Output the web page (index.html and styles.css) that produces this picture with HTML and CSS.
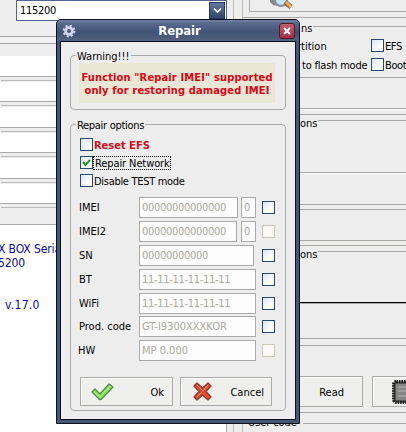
FILE: index.html
```html
<!DOCTYPE html>
<html lang="en">
<head>
<meta charset="utf-8">
<title>Repair</title>
<link rel="stylesheet" href="styles.css">
</head>
<body>
<div class="app">
  <div class="left">
    <div class="port"><div class="combo"><span class="t">115200</span><span class="drop"><svg width="9" height="7" viewBox="0 0 9 7"><path d="M1 1.500 4.500 5 8 1.500" fill="none" stroke="#fff" stroke-width="1.600"/></svg></span></div></div>
    <div class="sep"></div>
    <div class="rows"><i></i><i></i><i></i><i></i><i></i><i></i></div>
    <div class="log"><p>X BOX Serial</p><p>5200</p><p class="ver">v.17.0</p></div>
  </div>
  <div class="right">
    <div class="search"><svg width="24" height="11" viewBox="0 0 24 11"><path d="M0 0h11v5l-3 1-5-1-3-3z" fill="#888"/><circle cx="11" cy="0" r="6" fill="#bfe5f8" stroke="#8a9298" stroke-width="2"/><path d="m15 2 6 5" stroke="#8b6848" stroke-width="5"/><path d="m16 2 5 5" stroke="#f6a95a" stroke-width="3"/></svg></div>
    <div class="panel p1"><div class="legend"><span class="t">ns</span></div>
      <div class="opt o1"><span class="t">rtition</span><b class="cb"></b><span class="t">EFS</span></div>
      <div class="opt o2"><span class="t">to flash mode</span><b class="cb"></b><span class="t">Boot</span></div>
    </div>
    <div class="panel p2"></div>
    <div class="panel p3"><div class="legend"><span class="t">ons</span></div></div>
    <div class="panel p4"></div>
    <div class="panel p5"></div>
    <div class="panel p6"><div class="legend"><span class="t">ons</span></div></div>
    <div class="panel p7"></div>
    <div class="panel p8"><div class="btn read"><span class="t">Read</span></div><div class="btn chip"><svg width="22" height="24" viewBox="0 0 22 24"><rect x="1.500" y="1.500" width="24" height="21" rx="3" fill="#555" stroke="#111" stroke-width="3" stroke-dasharray="1.500 1"/><rect x="4" y="4" width="20" height="16" fill="#858585"/><path d="M6 7h16M6 11h16M6 16h16" stroke="#b5b5b5"/></svg></div></div>
    <div class="user"><span class="t">User code</span></div>
  </div>
</div>
<div class="dialog">
  <div class="title">
    <svg class="gear" width="14" height="14" viewBox="0 0 14 14"><circle cx="7" cy="7" r="3.400" fill="none" stroke="#d3d5f2" stroke-width="2.800"/><circle cx="7" cy="7" r="5.400" fill="none" stroke="#d3d5f2" stroke-width="2" stroke-dasharray="2.100 2.140"/></svg>
    <h1>Repair</h1>
    <span class="close"><svg width="8" height="8" viewBox="0 0 8 8"><path d="m1 1 6 6M7 1 1 7" stroke="#fff" stroke-width="1.800"/></svg></span>
  </div>
  <div class="body">
    <div class="group warning"><span class="cap t">Warning!!!</span>
      <div class="msg"><span>Function "Repair IMEI" supported</span><span>only for restoring damaged IMEI</span></div>
    </div>
    <div class="group options"><span class="cap t">Repair options</span>
      <label class="check red"><b class="cb"></b><span>Reset EFS</span></label>
      <label class="check"><b class="cb"><svg width="9" height="9" viewBox="0 0 9 9"><path d="m1 4 2.500 3L8 2" fill="none" stroke="#229222" stroke-width="2"/></svg></b><span class="focus">Repair Network</span></label>
      <label class="check"><b class="cb"></b><span class="t">Disable TEST mode</span></label>
      <div class="fields">
        <div class="row"><span class="name">IMEI</span><span class="in w98">00000000000000</span><span class="in one">0</span><b class="cb"></b></div>
        <div class="row"><span class="name">IMEI2</span><span class="in w97">00000000000000</span><span class="in one">0</span><b class="cb off"></b></div>
        <div class="row"><span class="name">SN</span><span class="in w115">00000000000</span><b class="cb"></b></div>
        <div class="row"><span class="name">BT</span><span class="in">11-11-11-11-11-11</span><b class="cb"></b></div>
        <div class="row"><span class="name">WiFi</span><span class="in">11-11-11-11-11-11</span><b class="cb"></b></div>
        <div class="row prod"><span class="name">Prod. code</span><span class="in model">GT-I9300XXXKOR</span><b class="cb"></b></div>
        <div class="row"><span class="name hw">HW</span><span class="in model">MP 0.000</span><b class="cb off"></b></div>
      </div>
      <div class="actions">
        <div class="btn ok"><svg width="23" height="18" viewBox="0 0 23 18"><path d="m1 9 3-3 5 5L18 1l4 3L10 16.500H8.500z" fill="#8ee05e" stroke="#4f8f45" stroke-linejoin="round" stroke-width="1.300"/><path d="m3 9 6 5L19 3" fill="none" stroke="#b9f090"/></svg><span>Ok</span></div>
        <div class="btn cancel"><svg width="19" height="19" viewBox="0 0 19 19"><path d="m4 1 5.500 5L15 1l3 3-5 5.500 5 5.500-3 3-5.500-5L4 18l-3-3 5-5.500L1 4z" fill="#ec4b28" stroke="#8d3b32" stroke-linejoin="round" stroke-width="1.300"/><path d="m4 3 6 6 5-6M4 15l5-5" fill="none" stroke="#ff987a"/></svg><span>Cancel</span></div>
      </div>
    </div>
  </div>
</div>
</body>
</html>
```
FILE: styles.css
```css
* { box-sizing: border-box; }
body { margin: 0; width: 406px; height: 432px; overflow: hidden; position: relative; background: #ededed; color: #000; font: 11px/14px "DejaVu Sans Condensed", "DejaVu Sans", sans-serif; white-space: nowrap; }
.t { letter-spacing: -0.3px; }
.app { display: flex; height: 432px; }
.left { flex: none; width: 242px; display: flex; flex-direction: column; background: linear-gradient(#bbb, #bbb) 233px 0 / 1px 100% no-repeat; }
.port { height: 36px; padding-left: 16px; }
.combo { width: 211px; height: 21px; border: 1px solid #53668f; background: #fff; display: flex; justify-content: space-between; padding: 3px 1px 1px 3px; }
.drop { width: 16px; height: 17px; margin-top: -2px; background: linear-gradient(#63779e, #334669); border: 1px solid #263a60; display: grid; place-items: center; }
.sep { height: 8px; width: 226px; border-top: 1px solid #a4a4a0; border-bottom: 1px solid #a4a4a0; background: #f2f2f2; }
.rows { padding-top: 12px; width: 227px; height: 180px; display: flex; flex-direction: column; gap: 5px; }
.rows i { height: 20.500px; flex: none; background: #fff; border-bottom: 1px solid #aaa; box-shadow: 0 4px 0 -1px #ededed, 0 5px 0 -1px #bbb; }
.log { width: 227px; flex: 1; background: #fff; border: solid #aaa; border-width: 1px 1px 0 0; color: #0b0ba0; padding-top: 17px; font-size: 12px; letter-spacing: -0.1px; }
.log p { margin: 0 0 0 -2px; line-height: 14px; }
.log p:first-child { margin-left: -2px; }
.log .ver { margin: 28px 0 0 5px; letter-spacing: 0.3px; }
.right { flex: 1; min-width: 0; border-left: 1px solid #bbb; display: flex; flex-direction: column; }
.search { height: 14px; margin-left: 6px; padding-left: 20px; border: solid #aaa; border-width: 0 0 1px 1px; }
.search svg { display: block; }
.panel { border: solid #a6a6a2; border-width: 1px 0; flex: none; }
.legend { display: flex; align-items: center; gap: 1px; padding-left: 58px; height: 14px; }
.legend .t { margin-top: 4px; letter-spacing: 0; }
.legend::after { content: ""; flex: 1; height: 1px; background: #a9a9a5; margin-top: -2px; }
.p1 { height: 61px; margin-top: 5px; padding-top: 2px; }
.opt { display: flex; align-items: center; height: 19px; }
.opt .cb { margin-left: auto; }
.opt .t { letter-spacing: 0; padding-top: 2px; }
.opt .t:last-child { width: 21px; margin-left: 1px; letter-spacing: -0.4px; }
.o1 { padding-left: 54px; margin-top: 2px; }
.o2 { padding-left: 59px; }
.o2 .t { letter-spacing: -0.2px; }
.p2 { height: 31px; border-top: 0; box-shadow: 0 1px #fff; }
.p3 { height: 59px; margin-top: 5px; }
.p4 { height: 32px; border-top: 0; box-shadow: inset 0 1px #fff; }
.p5 { height: 32px; margin-top: 4px; }
.p6 { height: 58px; margin-top: 4px; border-bottom-color: #000; box-shadow: 0 1px #aaa; }
.p7 { height: 36px; border-top: 0; }
.p8 { height: 68px; margin-top: 6px; display: flex; gap: 9px; padding: 30px 0 5px; }
.p3 .legend, .p6 .legend { height: 13px; padding-left: 57px; }
.btn { border: 1px solid #aaa; box-shadow: inset 1px 1px #fff; background: #efefee; display: flex; align-items: center; justify-content: space-between; }
.btn span { padding-top: 2px; }
.read { width: 120px; flex: none; justify-content: flex-end; padding-right: 18px; }
.read .t { letter-spacing: 0; }
.chip { flex: 1; padding-left: 19px; border-right: 0; overflow: hidden; }
.chip svg { flex: none; }
.user { height: 20px; margin-top: 1px; padding-left: 5px; padding-top: 2px; background: linear-gradient(#aaa, #aaa) 60px 9px / 104px 1px no-repeat; }
.user .t { letter-spacing: -0.1px; }
.cb { width: 13px; height: 13px; flex: none; border: 1px solid #25496f; background: linear-gradient(135deg, #dce6ef, #fff 70%); display: grid; place-items: center; }
.cb.off { border-color: #ccc9ba; background: #faf9f8; }
.dialog { position: absolute; left: 56px; top: 19px; width: 244px; height: 405px; border: 1px solid #081023; border-radius: 5px 5px 0 0; background: #465673; padding: 0 3px 3px; overflow: hidden; }
.title { height: 21px; margin: 0 -3px; background: linear-gradient(#7583a0, #586b8e 14%, #405274 60%, #53637f); display: flex; align-items: center; justify-content: space-between; padding: 0 4px 0 5px; }
.title h1 { margin: 0 0 0 4px; color: #fff; font: bold 13px/18px "DejaVu Sans Condensed", sans-serif; letter-spacing: -0.1px; }
.close { width: 16px; height: 16px; border: 1px solid #561322; border-radius: 3px; background: linear-gradient(#c0606f, #a72c45); display: grid; place-items: center; }
.body { height: 379px; border: 1px solid #081023; background: #ededed; padding: 13px 9px 8px; }
.group { border: 1px solid #aaa; border-radius: 4px; position: relative; }
.cap { position: absolute; top: -5px; left: 5px; line-height: 12px; padding: 0 1px; background: #ededed; }
.warning { height: 55px; padding: 7px 10px 0 8px; }
.warning .cap { letter-spacing: 0; }
.msg { height: 40px; background: #ebe7d6; display: flex; flex-direction: column; align-items: center; padding-top: 8px; color: #dc0612; font: bold 11px/13px "DejaVu Sans Condensed", sans-serif; letter-spacing: 0.15px; }
.options { height: 287px; margin-top: 14px; padding: 11px 10px 0 9px; }
.check { display: flex; align-items: center; height: 18px; margin-bottom: 0; }
.check span { padding: 1px 1px 0; }
.check .cb { margin-top: -1px; }
.red { color: #d20d20; font-weight: bold; }
.check .focus { outline: 1px dotted #000; outline-offset: -1px; line-height: 13px; letter-spacing: -0.1px; padding: 1px 1px 0 2px; }
.fields { margin-top: 7px; display: flex; flex-direction: column; gap: 3px; }
.row { display: flex; align-items: center; height: 21px; }
.name { width: 60px; margin-left: -1px; flex: none; }
.hw { text-indent: -1px; }
.in { height: 21px; flex: 1; border: 1px solid #aaa; background: #fdfdfd; color: #aaa9a0; padding: 3px 0 0 2px; line-height: 14px; letter-spacing: -0.3px; }
.model { letter-spacing: 0; }
.row .cb { margin-left: 6px; }
.w98 { flex: 0 0 99px; }
.w97 { flex: 0 0 98px; margin-right: 1px; }
.w115 { flex: 0 0 115px; margin-right: 2px; }
.one { flex: 0 0 15px; margin-left: 3px; }
.prod { margin-top: -1px; }
.actions { display: flex; gap: 7px; margin-top: 16px; }
.actions .btn { height: 29px; width: 93px; padding: 0 8px 0 10px; }
.actions .cancel { width: 92px; padding: 0 7px 0 12px; }
```
